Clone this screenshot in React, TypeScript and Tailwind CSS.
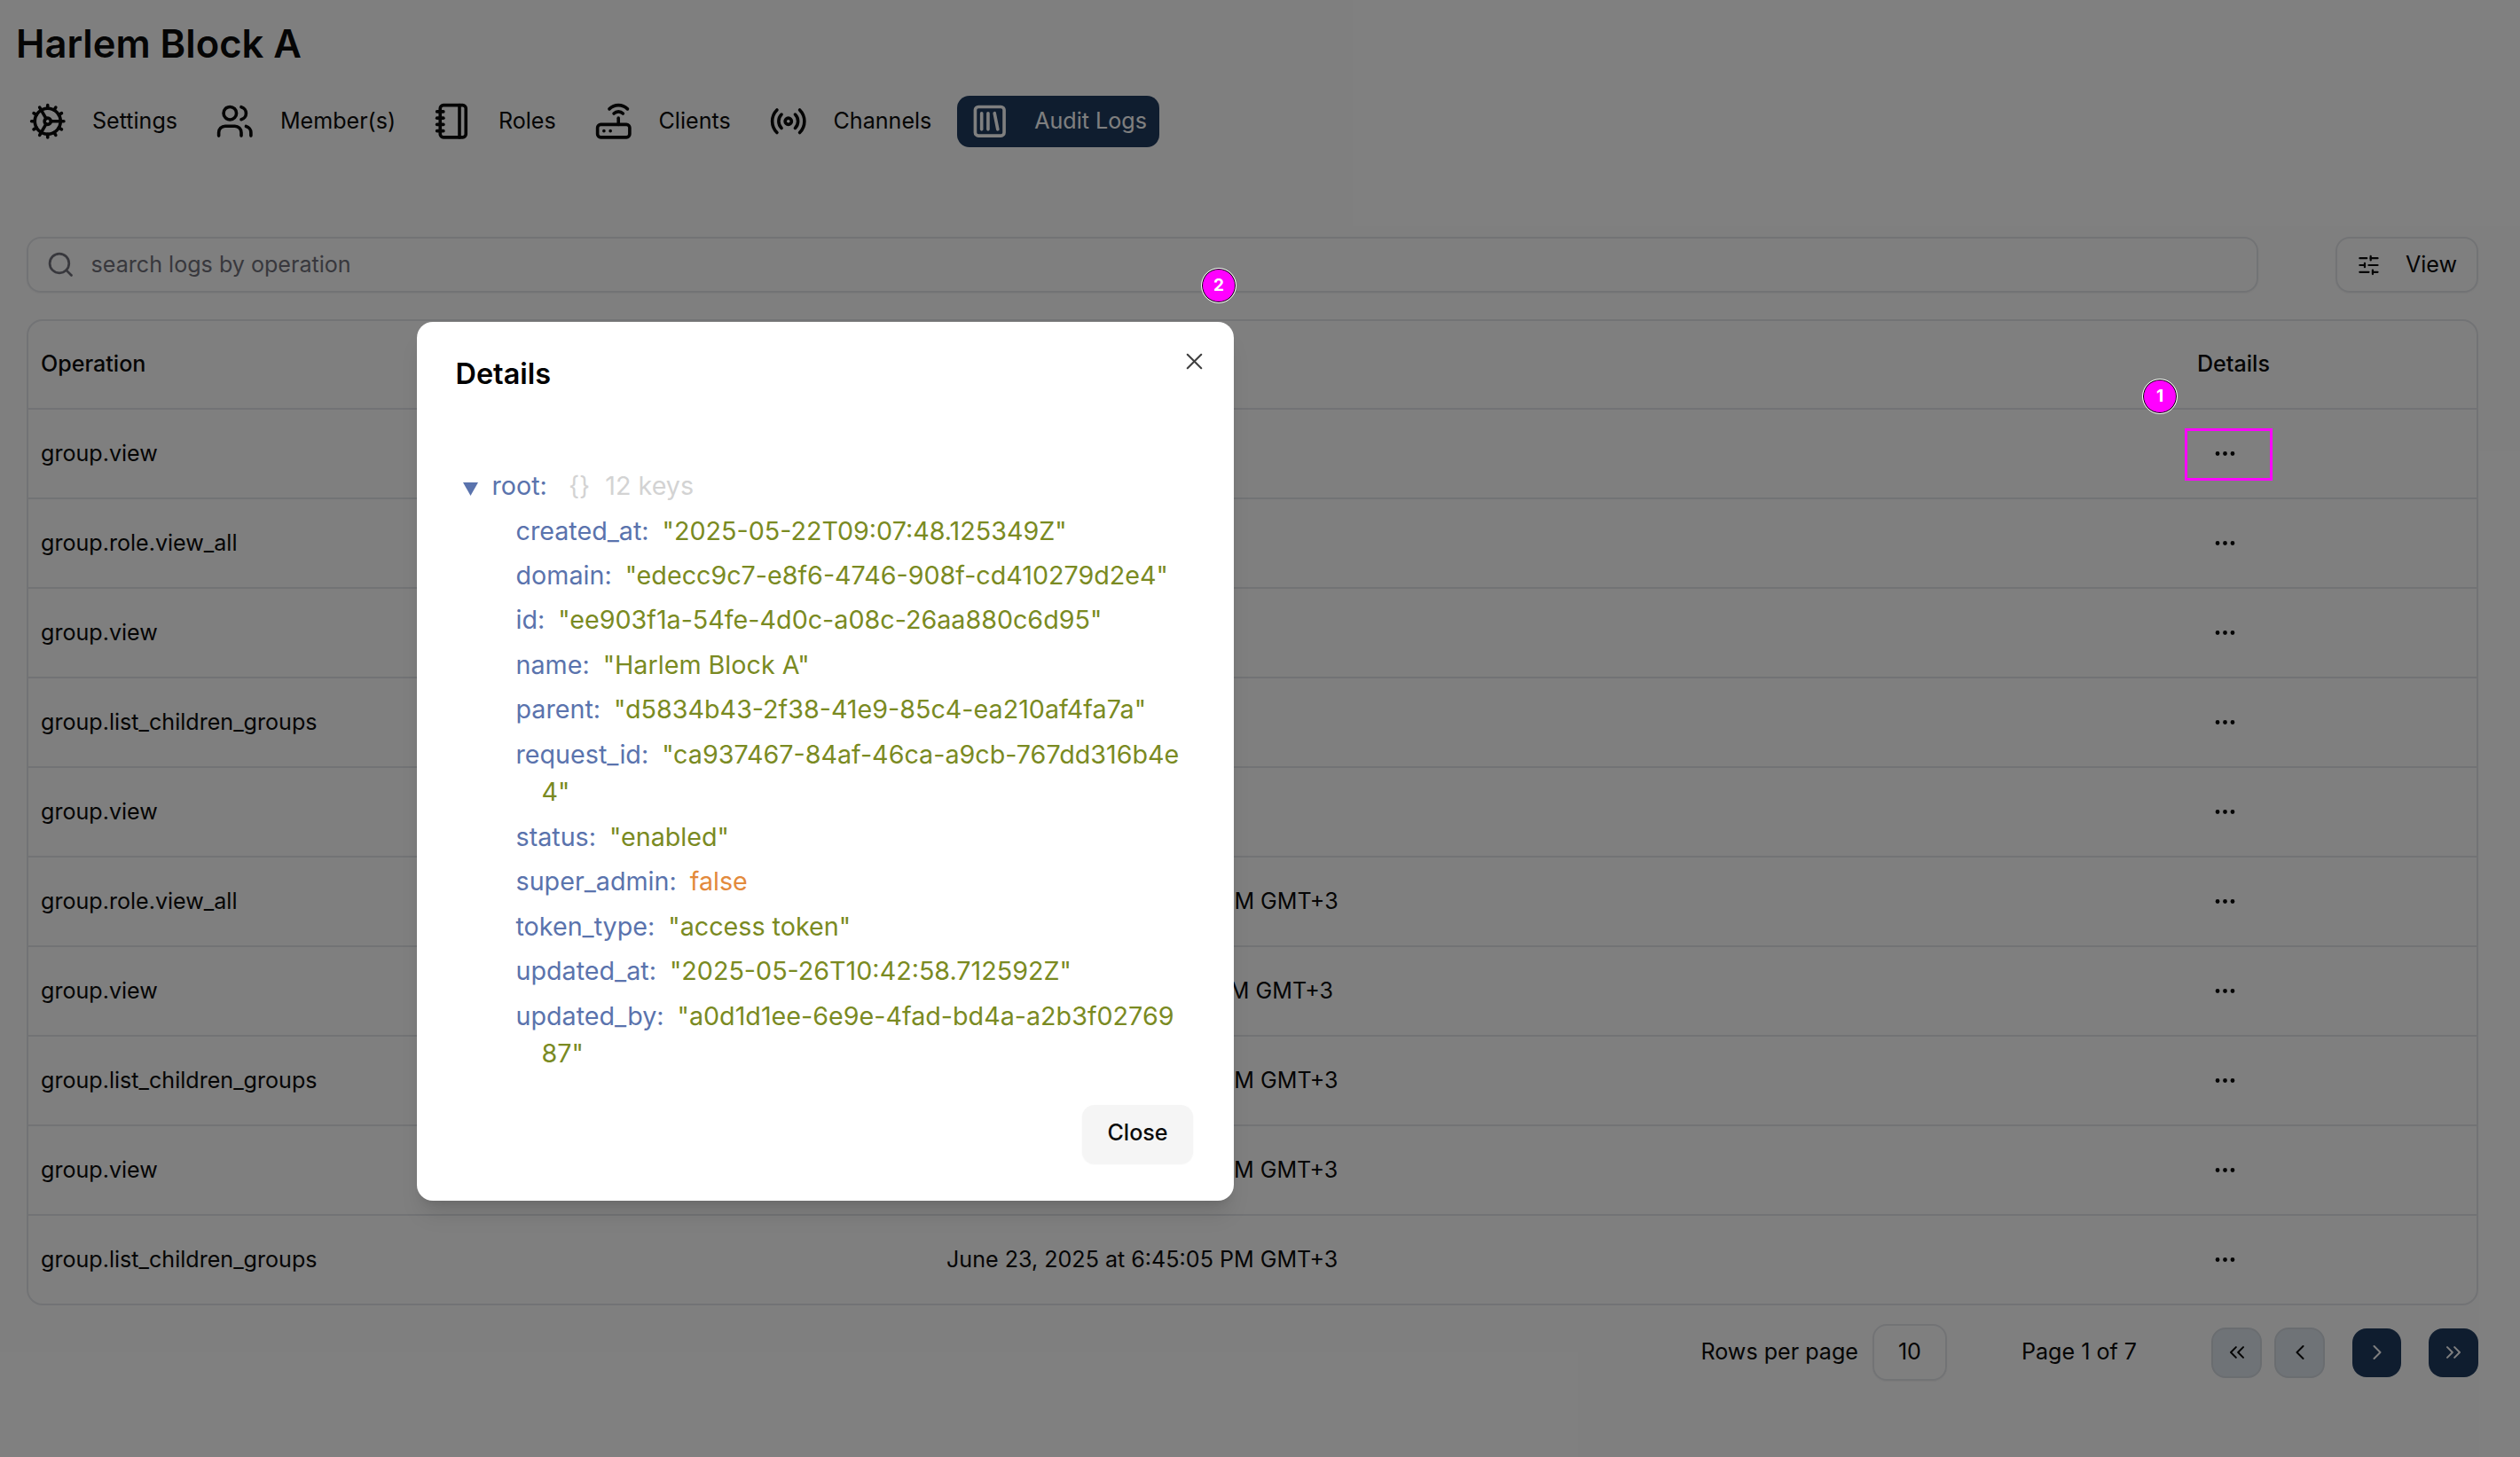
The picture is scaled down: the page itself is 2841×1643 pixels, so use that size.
import React from "react";
import {
  ChevronLeft,
  ChevronRight,
  ChevronsLeft,
  ChevronsRight,
  Cog,
  Ellipsis,
  Notebook,
  Radio,
  Router,
  Search,
  SlidersHorizontal,
  SquareLibrary,
  Users,
  X,
} from "lucide-react";

const tabs = [
  { label: "Settings", icon: Cog },
  { label: "Member(s)", icon: Users },
  { label: "Roles", icon: Notebook },
  { label: "Clients", icon: Router },
  { label: "Channels", icon: Radio },
  { label: "Audit Logs", icon: SquareLibrary, active: true },
];

const logs = [
  { op: "group.view", date: "" },
  { op: "group.role.view_all", date: "" },
  { op: "group.view", date: "" },
  { op: "group.list_children_groups", date: "" },
  { op: "group.view", date: "" },
  { op: "group.role.view_all", date: "June 23, 2025 at 6:45:42 PM GMT+3" },
  { op: "group.view", date: "June 23, 2025 at 6:45:41 PM GMT+3" },
  { op: "group.list_children_groups", date: "June 23, 2025 at 6:45:06 PM GMT+3" },
  { op: "group.view", date: "June 23, 2025 at 6:45:05 PM GMT+3" },
  { op: "group.list_children_groups", date: "June 23, 2025 at 6:45:05 PM GMT+3" },
];

const fields: { k: string; v: string; more?: string; orange?: boolean }[] = [
  { k: "created_at", v: '"2025-05-22T09:07:48.125349Z"' },
  { k: "domain", v: '"edecc9c7-e8f6-4746-908f-cd410279d2e4"' },
  { k: "id", v: '"ee903f1a-54fe-4d0c-a08c-26aa880c6d95"' },
  { k: "name", v: '"Harlem Block A"' },
  { k: "parent", v: '"d5834b43-2f38-41e9-85c4-ea210af4fa7a"' },
  { k: "request_id", v: '"ca937467-84af-46ca-a9cb-767dd316b4e', more: '4"' },
  { k: "status", v: '"enabled"' },
  { k: "super_admin", v: "false", orange: true },
  { k: "token_type", v: '"access token"' },
  { k: "updated_at", v: '"2025-05-26T10:42:58.712592Z"' },
  { k: "updated_by", v: '"a0d1d1ee-6e9e-4fad-bd4a-a2b3f02769', more: '87"' },
];

function Badge({ n, className }: { n: number; className: string }) {
  return (
    <div
      className={
        "absolute w-[38px] h-[38px] rounded-full bg-[#ff00ff] border-[1.5px] border-black outline outline-[1.5px] outline-white flex items-center justify-center text-white text-[19px] font-bold " +
        className
      }
    >
      {n}
    </div>
  );
}

export default function App() {
  return (
    <div className="relative min-h-[1643px] bg-white overflow-hidden font-[Inter,sans-serif] text-[#0a0a0a]">
      <div className="pt-[20px] pl-[17px]">
        <h1 className="ml-px text-[43.5px] leading-[58px] font-semibold">Harlem Block A</h1>
        <div className="flex gap-[14.3px] mt-[30px]">
          {tabs.map((t) => (
            <div
              key={t.label}
              className={
                t.active
                  ? "flex items-center gap-[29px] h-[58px] px-[14.5px] rounded-[14px] bg-[#1e3a5f] text-white text-[25.1px]"
                  : "flex items-center gap-[29px] h-[58px] px-[14.5px] rounded-[14px] text-[25.1px]"
              }
            >
              <t.icon className="w-[43.5px] h-[43.5px]" />
              <span>{t.label}</span>
            </div>
          ))}
        </div>
      </div>

      <div className="pl-[30px] pr-[47px]">
        <div className="flex justify-between mt-[101px]">
          <div className="flex items-center gap-[18px] w-[2516px] h-[63px] pl-[20px] border-2 border-[#e5e7eb] rounded-[16px] shadow-xs text-[25.1px] text-[#71717a]">
            <Search className="w-[32.6px] h-[32.6px]" />
            <span>search logs by operation</span>
          </div>
          <div className="flex items-center gap-[28px] w-[161px] h-[63px] px-[22px] border-2 border-[#e5e7eb] rounded-[16px] shadow-xs text-[25.1px]">
            <SlidersHorizontal className="w-[30px] h-[30px]" />
            <span>View</span>
          </div>
        </div>

        <div className="mt-[30px] border-2 border-[#e5e7eb] rounded-[18px] text-[25.1px] overflow-hidden">
          <div className="grid grid-cols-[1021px_1410px_1fr] items-center h-[98px]">
            <div className="pl-[14px] font-medium">Operation</div>
            <div className="pl-[14px] font-medium">Occurred At</div>
            <div className="pl-[14px] font-medium">Details</div>
          </div>
          {logs.map((row, i) => (
            <div
              key={i}
              className="grid grid-cols-[1021px_1410px_1fr] items-center h-[101px] border-t-2 border-[#e5e7eb]"
            >
              <div className="pl-[14px]">{row.op}</div>
              <div className="pl-[14px]">{row.date}</div>
              <div className="pl-[31px]">
                <Ellipsis className="w-[29px] h-[29px]" />
              </div>
            </div>
          ))}
        </div>

        <div className="flex items-center justify-end mt-[21px] text-[25.1px]">
          <span>Rows per page</span>
          <div className="flex items-center justify-center w-[84px] h-[64px] ml-[16px] border-2 border-[#e5e7eb] rounded-[16px] shadow-xs">
            10
          </div>
          <span className="ml-[84px]">Page 1 of 7</span>
          <div className="flex items-center justify-center w-[57px] h-[57px] ml-[84px] border-2 border-[#d4dae1] rounded-[16px] bg-[#dfe7ef]">
            <ChevronsLeft className="w-[28px] h-[28px]" strokeWidth={1.7} />
          </div>
          <div className="flex items-center justify-center w-[57px] h-[57px] ml-[14px] border-2 border-[#d4dae1] rounded-[16px] bg-[#dfe7ef]">
            <ChevronLeft className="w-[28px] h-[28px]" strokeWidth={1.7} />
          </div>
          <div className="flex items-center justify-center w-[55px] h-[55px] ml-[31px] rounded-[16px] bg-[#1e3a5f] text-white">
            <ChevronRight className="w-[28px] h-[28px]" strokeWidth={1.7} />
          </div>
          <div className="flex items-center justify-center w-[56px] h-[55px] ml-[31px] rounded-[16px] bg-[#1e3a5f] text-white">
            <ChevronsRight className="w-[28px] h-[28px]" strokeWidth={1.7} />
          </div>
        </div>
      </div>

      <div className="absolute inset-0 bg-black/50" />

      <div className="absolute left-[469.5px] top-[363px] w-[921.5px] h-[991px] flex flex-col bg-white rounded-[18px] shadow-xl pt-[38px] pl-[44px] pr-[46px] pb-[42px]">
        <button className="absolute right-[29.5px] top-[29px] text-[#404040]">
          <X className="w-[31px] h-[31px]" strokeWidth={1.6} />
        </button>
        <h2 className="text-[32.4px] leading-[42px] font-semibold text-black">Details</h2>

        <div className="mt-[76.5px] text-[28.7px] leading-[42.3px] text-[#5a73ad]">
          <div className="flex items-center h-[58px]">
            <svg viewBox="0 0 17 15" className="w-[17px] h-[15px] ml-[8px] mt-[5px] fill-[#5a73ad]">
              <polygon points="0,0 17,0 8.5,15" />
            </svg>
            <span className="ml-[16px]">root:</span>
            <span className="ml-[24px] text-[#d3d3d3]">{"{}"}</span>
            <span className="ml-[17px] text-[#d3d3d3]">12 keys</span>
          </div>
          <div className="ml-[68px]">
            {fields.map((f) => (
              <div key={f.k} className="pl-[29px] -indent-[29px] pb-[8.2px] whitespace-nowrap">
                <span>{f.k}:</span>
                <span className={f.orange ? "ml-[15px] text-[#e38a3c]" : "ml-[15px] text-[#7a8a22]"}>
                  {f.v}
                  {f.more && (
                    <>
                      <br />
                      {f.more}
                    </>
                  )}
                </span>
              </div>
            ))}
          </div>
        </div>

        <div className="flex justify-end mt-auto">
          <button className="w-[125px] h-[66px] rounded-[14px] bg-[#f5f5f5] shadow-xs text-[25.1px] font-medium pb-[2px]">
            Close
          </button>
        </div>
      </div>

      <div className="absolute left-[2462.5px] top-[482.5px] w-[99px] h-[59px] border-[3.5px] border-[#ff00ff]" />
      <Badge n={1} className="left-[2416px] top-[428px]" />
      <Badge n={2} className="left-[1355px] top-[303px]" />
    </div>
  );
}
